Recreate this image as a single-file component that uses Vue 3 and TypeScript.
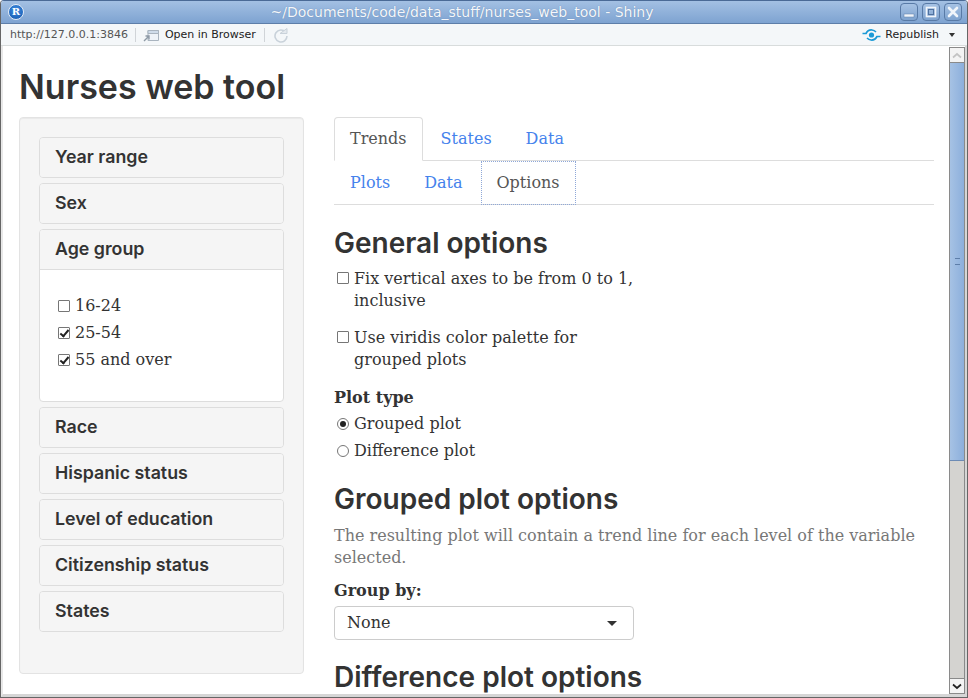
<template>
  <div class="window">
    <div class="titlebar">
      <span class="r-logo">R</span>
      <div class="title">~/Documents/code/data_stuff/nurses_web_tool - Shiny</div>
      <div class="win-btns">
        <span class="win-btn">
          <svg width="14" height="14" viewBox="0 0 14 14"><rect x="2" y="9" width="10" height="3" fill="#f1f5fa" stroke="#5b7ca8" stroke-width="0.5" /></svg>
        </span>
        <span class="win-btn">
          <svg width="14" height="14" viewBox="0 0 14 14"><rect x="2.500" y="2.500" width="9" height="9" fill="none" stroke="#f1f5fa" stroke-width="1.600" /><rect x="4.500" y="4.500" width="5" height="5" fill="none" stroke="#4f719f" stroke-width="1" /></svg>
        </span>
        <span class="win-btn">
          <svg width="14" height="14" viewBox="0 0 14 14"><path d="M3 3l8 8M11 3l-8 8" stroke="#f1f5fa" stroke-width="2.600" stroke-linecap="round" /></svg>
        </span>
      </div>
    </div>
    <div class="toolbar">
      <span class="url">http://127.0.0.1:3846</span>
      <span class="sep"></span>
      <svg class="open-icon" width="17" height="14" viewBox="0 0 17 14">
        <path d="M5 2.500h10.500v10H5z" fill="#eef3f8" stroke="#a9b4bf" />
        <path d="M5 2.500h10.500v3H5z" fill="#cfdcea" stroke="#a9b4bf" />
        <path d="M1 13l4.500-4.500M2.500 8h3.500v3.500" fill="none" stroke="#8e9aa6" stroke-width="1.400" />
      </svg>
      <span class="tool-label">Open in Browser</span>
      <span class="sep"></span>
      <svg class="reload" width="16" height="16" viewBox="0 0 16 16">
        <path d="M12.500 5A6 6 0 1 0 14 9" fill="none" stroke="#c9d2da" stroke-width="1.600" />
        <path d="M7 6.500h7V1.500z" fill="#e4e9ee" stroke="#c9d2da" />
      </svg>
      <span class="grow"></span>
      <svg class="pub-icon" width="19" height="12" viewBox="0 0 19 12">
        <circle cx="9.500" cy="6" r="2.600" fill="#1b9ad6" />
        <path d="M0.500 4.500h3.500C5.500 1.500 8 0.800 10 1s3 1 4 2" fill="none" stroke="#1b9ad6" stroke-width="1.700" />
        <path d="M18.500 7.500H15c-1.500 3-4 3.700-6 3.500s-3-1-4-2" fill="none" stroke="#1b9ad6" stroke-width="1.700" />
      </svg>
      <span class="tool-label">Republish</span>
      <span class="caret"></span>
    </div>
    <div class="viewport">
      <div class="page">
        <h1>Nurses web tool</h1>
        <div class="layout">
          <aside class="sidebar">
            <div v-for="p in panels" :key="p.name" class="panel">
              <div class="panel-head" :class="{ open: p.options }">{{ p.name }}</div>
              <div v-if="p.options" class="panel-body">
                <label v-for="o in p.options" :key="o.label" class="age-item">
                  <input type="checkbox" :checked="o.checked" />
                  <span>{{ o.label }}</span>
                </label>
              </div>
            </div>
          </aside>
          <main class="main">
            <div class="tabs">
              <a v-for="(t, i) in topTabs" :key="t" class="tab" :class="{ active: i === 0 }">{{ t }}</a>
            </div>
            <div class="tabs sub">
              <a v-for="(t, i) in subTabs" :key="t" class="tab" :class="{ focused: i === 2 }">{{ t }}</a>
            </div>
            <h2 class="first">General options</h2>
            <label class="check">
              <input type="checkbox" />
              <span>Fix vertical axes to be from 0 to 1, inclusive</span>
            </label>
            <label class="check">
              <input type="checkbox" />
              <span>Use viridis color palette for grouped plots</span>
            </label>
            <div class="field-label">Plot type</div>
            <label class="radio"><input type="radio" name="plot" checked /><span>Grouped plot</span></label>
            <label class="radio"><input type="radio" name="plot" /><span>Difference plot</span></label>
            <h2>Grouped plot options</h2>
            <p class="help">The resulting plot will contain a trend line for each level of the variable selected.</p>
            <div class="field-label group">Group by:</div>
            <div class="select">
              <span>None</span>
              <span class="select-caret"></span>
            </div>
            <h2 class="diff">Difference plot options</h2>
          </main>
        </div>
      </div>
      <div class="scrollbar">
        <div class="sb-btn">
          <svg width="10" height="7" viewBox="0 0 10 7"><path d="M1 5.500l4-3.500 4 3.500" fill="none" stroke="#c4c4c4" stroke-width="1.700" /></svg>
        </div>
        <div class="sb-track"><div class="sb-thumb"><span class="grip"></span></div></div>
        <div class="sb-btn">
          <svg width="10" height="7" viewBox="0 0 10 7"><path d="M1 1.500l4 3.500 4-3.500" fill="none" stroke="#222" stroke-width="1.700" /></svg>
        </div>
      </div>
    </div>
  </div>
</template>

<script setup lang="ts">
interface AgeOption {
  label: string
  checked: boolean
}

const panels: { name: string; options?: AgeOption[] }[] = [
  { name: 'Year range' },
  { name: 'Sex' },
  {
    name: 'Age group',
    options: [
      { label: '16-24', checked: false },
      { label: '25-54', checked: true },
      { label: '55 and over', checked: true }
    ]
  },
  { name: 'Race' },
  { name: 'Hispanic status' },
  { name: 'Level of education' },
  { name: 'Citizenship status' },
  { name: 'States' }
]

const topTabs = ['Trends', 'States', 'Data']
const subTabs = ['Plots', 'Data', 'Options']
</script>

<style>
html, body {
  margin: 0;
  overflow: hidden;
}
</style>

<style scoped>
.window {
  width: 968px;
  height: 698px;
  box-sizing: border-box;
  display: flex;
  flex-direction: column;
  overflow: hidden;
  background: #fff;
  border: 1px solid #666;
  border-top-color: #4a6a96;
  border-radius: 4px 4px 0 0;
  font-family: "DejaVu Serif", serif;
}
.titlebar {
  height: 23px;
  flex: none;
  box-sizing: border-box;
  display: flex;
  align-items: center;
  position: relative;
  background: linear-gradient(#a3c0e3, #7ea3d1);
  border-bottom: 1px solid #5d7ea9;
  color: #f4f7fb;
  font: 14px "DejaVu Sans", sans-serif;
}
.r-logo {
  width: 14px;
  height: 14px;
  margin-left: 7px;
  border: 1px solid #dfe9f5;
  border-radius: 50%;
  background: radial-gradient(circle at 50% 35%, #3d8be0, #1558ad);
  color: #fff;
  font: bold 10px/14px "DejaVu Serif", serif;
  text-align: center;
}
.title {
  position: absolute;
  left: 0;
  right: 44px;
  text-align: center;
  text-shadow: 0 0 1px #5d7ea9;
}
.win-btns {
  margin-left: auto;
  margin-right: 5px;
  display: flex;
  gap: 4px;
}
.win-btn {
  width: 18px;
  height: 18px;
  box-sizing: border-box;
  display: flex;
  align-items: center;
  justify-content: center;
  border: 1px solid #587aa6;
  border-radius: 4px;
  background: linear-gradient(#a6c2e4, #7fa3cf);
}
.toolbar {
  height: 22px;
  flex: none;
  display: flex;
  align-items: center;
  box-sizing: border-box;
  padding: 0 10px 0 9px;
  background: #f4f7f9;
  border-bottom: 1px solid #d8dcdc;
  font: 11px "DejaVu Sans", sans-serif;
  color: #222;
}
.url {
  color: #555;
}
.tool-label {
  margin-right: 1px;
}
.sep {
  width: 1px;
  height: 14px;
  margin: 0 7px;
  background: #d0d4d8;
}
.open-icon {
  margin-right: 5px;
}
.reload {
  margin-left: 1px;
}
.grow {
  flex: 1;
}
.pub-icon {
  margin-right: 4px;
}
.caret {
  margin: 1px 2px 0 9px;
  border: 3px solid transparent;
  border-top: 4px solid #333;
  border-bottom: 0;
}
.viewport {
  flex: 1;
  min-height: 0;
  display: flex;
  border-left: 2px solid #e8e8e8;
  border-right: 2px solid #d6d6d6;
  border-bottom: 3px solid #d6d6d6;
}
.page {
  flex: 1;
  min-width: 0;
  overflow: hidden;
  padding: 0 15px 0 16px;
  color: #333;
  font-size: 16px;
  line-height: 22px;
}
h1 {
  margin: 21px 0 10px;
  font: 600 34px/40px Inter, sans-serif;
  color: #333;
}
.layout {
  display: flex;
  align-items: flex-start;
  gap: 30px;
}
.sidebar {
  width: 285px;
  height: 557px;
  flex: none;
  box-sizing: border-box;
  padding: 19px 19px 0;
  background: #f5f5f5;
  border: 1px solid #e3e3e3;
  border-radius: 4px;
  box-shadow: inset 0 1px 1px rgba(0, 0, 0, 0.05);
  display: flex;
  flex-direction: column;
  gap: 5px;
}
.panel {
  border: 1px solid #ddd;
  border-radius: 4px;
  background: #fff;
  overflow: hidden;
}
.panel-head {
  height: 39px;
  box-sizing: border-box;
  padding: 0 15px;
  background: #f5f5f5;
  font: 600 17.800px/37px Inter, sans-serif;
  color: #333;
}
.panel-head.open {
  border-bottom: 1px solid #ddd;
  height: 40px;
}
.panel-body {
  height: 131px;
  box-sizing: border-box;
  padding: 22px 18px 0;
  display: flex;
  flex-direction: column;
}
.age-item {
  height: 27px;
  display: flex;
  align-items: center;
  gap: 5px;
  font-size: 16px;
  color: #333;
}
input {
  appearance: none;
  width: 12px;
  height: 12px;
  margin: 0;
  flex: none;
  box-sizing: border-box;
  background: #fff;
  border: 1px solid #767676;
  position: relative;
}
input[type="checkbox"] {
  border-radius: 1px;
}
input[type="checkbox"]:checked::after {
  content: "";
  position: absolute;
  left: 3px;
  top: 0;
  width: 3px;
  height: 7px;
  border: solid #222;
  border-width: 0 2px 2px 0;
  transform: rotate(40deg);
}
input[type="radio"] {
  border-radius: 50%;
}
input[type="radio"]:checked::after {
  content: "";
  position: absolute;
  left: 2px;
  top: 2px;
  width: 6px;
  height: 6px;
  border-radius: 50%;
  background: #222;
}
.main {
  flex: 1;
  min-width: 0;
}
.tabs {
  display: flex;
  height: 43px;
  border-bottom: 1px solid #ddd;
  gap: 2px;
}
.tab {
  box-sizing: border-box;
  height: 44px;
  padding: 10px 15px;
  border: 1px solid transparent;
  border-radius: 4px 4px 0 0;
  color: #4582ec;
}
.tab.active {
  color: #555;
  background: #fff;
  border-color: #ddd #ddd transparent;
}
.tab.focused {
  color: #555;
  border: 1px dotted #8fa8d8;
  border-radius: 0;
}
.sub {
  height: 43px;
}
h2 {
  margin: 21px 0 11px;
  font: 600 28px/29px Inter, sans-serif;
  color: #333;
}
h2.first {
  margin-top: 24px;
  margin-bottom: 10px;
}
h2.diff {
  margin-top: 23px;
}
.check {
  width: 300px;
  display: flex;
  gap: 5px;
  margin-bottom: 15px;
  padding-left: 3px;
}
.check input {
  margin-top: 4px;
}
.field-label {
  margin-top: 16px;
  font-weight: 700;
  margin-bottom: 1px;
}
.radio {
  display: flex;
  align-items: center;
  gap: 5px;
  height: 27px;
  padding-left: 3px;
}
.help {
  margin: 0 0 11px;
  color: #777;
}
.field-label.group {
  margin-top: 0;
  margin-bottom: 4px;
}
.select {
  width: 300px;
  height: 34px;
  box-sizing: border-box;
  padding: 0 12px;
  display: flex;
  align-items: center;
  justify-content: space-between;
  background: #fff;
  border: 1px solid #ccc;
  border-radius: 4px;
  color: #333;
}
.select-caret {
  border: 5px solid transparent;
  border-top: 5px solid #333;
  border-bottom: 0;
  margin-right: 4px;
}
.scrollbar {
  width: 16px;
  flex: none;
  box-sizing: border-box;
  display: flex;
  flex-direction: column;
  margin-top: 1px;
  background: #d4d3d0;
  border: 1px solid #8a8a8a;
  border-width: 0 1px;
}
.sb-btn {
  height: 14px;
  flex: none;
  display: flex;
  align-items: center;
  justify-content: center;
  background: #f4f4f4;
  border: 1px solid #8a8a8a;
  border-width: 1px 0;
}
.sb-track {
  flex: 1;
}
.sb-thumb {
  height: 397px;
  display: flex;
  align-items: center;
  justify-content: center;
  background: linear-gradient(90deg, #a6c2e4, #8cafdc);
  border-bottom: 1px solid #6c8bb5;
}
.grip {
  width: 5px;
  height: 5px;
  border-top: 1px solid #5d7ea9;
  border-bottom: 1px solid #5d7ea9;
}
</style>
